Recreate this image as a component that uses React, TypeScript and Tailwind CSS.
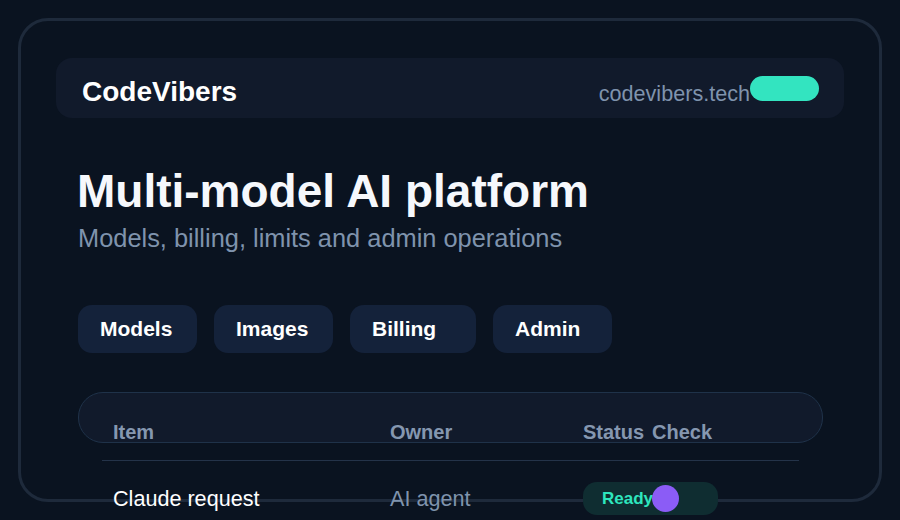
const tabs = [
  { label: "Models", width: "w-[119px]" },
  { label: "Images", width: "w-[119px]" },
  { label: "Billing", width: "w-[126px]" },
  { label: "Admin", width: "w-[119px]" },
];

export default function App() {
  return (
    <div className="h-[520px] w-[900px] overflow-hidden bg-[#0a1320] pt-[18px] font-['Liberation_Sans',Arial,sans-serif]">
      <div className="mx-[18px] h-[484px] rounded-[30px] border-[3px] border-[#1e2a3b] px-[35px] pt-[37px]">
        {/* top bar */}
        <header className="flex h-[60px] items-start justify-between rounded-[16px] bg-[#111a2b] pl-[26px] pr-[25px] pt-[18px]">
          <span className="text-[28px] font-bold leading-[32px] text-white">
            CodeVibers
          </span>
          <div className="flex items-baseline">
            <span className="text-[21.6px] leading-[28px] text-[#7f93ad]">
              codevibers.tech
            </span>
            <span className="block h-[25px] w-[69px] rounded-full bg-[#33e4c0]" />
          </div>
        </header>

        <h1 className="mt-[47px] pl-[21px] text-[46px] font-bold leading-[52px] text-[#f6f8fc]">
          Multi-model AI platform
        </h1>
        <p className="mt-[5px] pl-[22px] text-[25.4px] leading-[32px] text-[#7f93ad]">
          Models, billing, limits and admin operations
        </p>

        <nav className="mt-[51px] flex gap-[17px] pl-[22px]">
          {tabs.map((t) => (
            <button
              key={t.label}
              type="button"
              className={`flex h-[48px] ${t.width} items-center rounded-[14px] bg-[#14223a] pl-[22px] text-[21px] font-bold text-white`}
            >
              {t.label}
            </button>
          ))}
        </nav>

        {/* table */}
        <div className="ml-[22px] mr-[21px] mt-[39px] h-[51px] rounded-[25px] border border-[#1f3249] bg-[#111a2b] px-[23px] pt-[25px]">
          <div className="grid grid-cols-[277px_193px_69px_1fr] text-[20px] font-bold leading-[28px] text-[#8597b0]">
            <div className="pl-[11px]">Item</div>
            <div className="pl-[11px]">Owner</div>
            <div className="pl-[11px]">Status</div>
            <div className="pl-[11px]">Check</div>
          </div>
          <div className="mt-[14px] h-px bg-[#243349]" />
          <div className="mt-[21px] grid h-[33px] grid-cols-[277px_193px_69px_1fr] items-center text-[21.6px] leading-[28px]">
            <div className="pl-[11px] text-white">Claude request</div>
            <div className="pl-[11px] text-[#7f93ad]">AI agent</div>
            <div className="pl-[11px]">
              <span className="flex h-[33px] w-[135px] items-center rounded-[14px] bg-[#0f2d31] pl-[19px] text-[17px] font-bold text-[#2ee6be]">
                Ready
              </span>
            </div>
            <div className="pl-[11px]">
              <span className="block h-[27px] w-[27px] rounded-full bg-[#8b5cf6]" />
            </div>
          </div>
        </div>
      </div>
    </div>
  );
}
